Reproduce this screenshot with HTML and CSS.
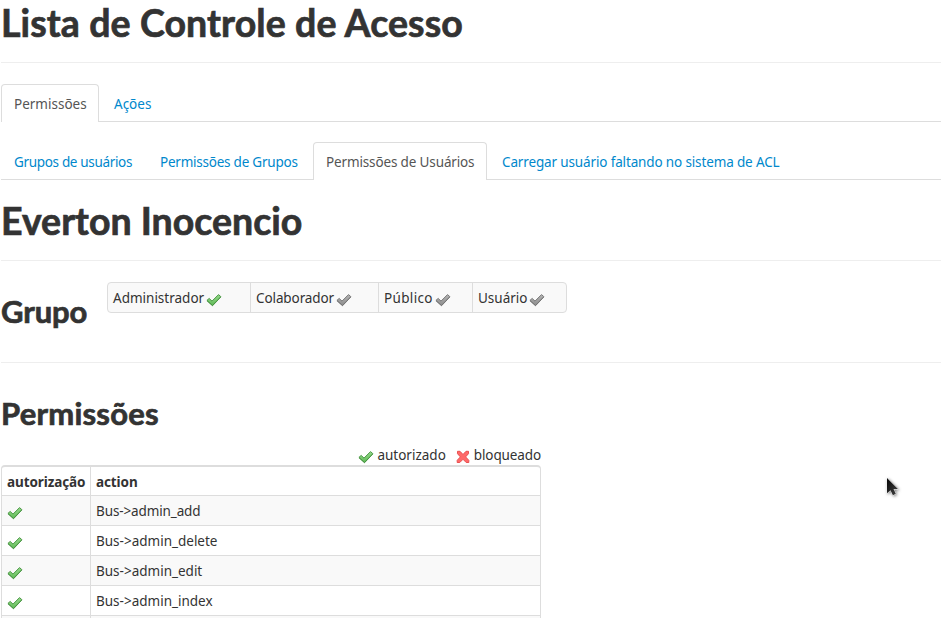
FILE: index.html
```html
<!DOCTYPE html>
<html lang="pt-BR">
<head>
<meta charset="utf-8">
<title>Lista de Controle de Acesso</title>
<link rel="stylesheet" href="styles.css">
</head>
<body>
<svg class="defs" width="0" height="0" aria-hidden="true">
  <defs>
    <linearGradient id="green" x1="0" y1="0" x2="0" y2="1"><stop offset="0" stop-color="#93d68a"/><stop offset=".5" stop-color="#7ccb72"/><stop offset="1" stop-color="#5fb957"/></linearGradient>
    <linearGradient id="gray" x1="0" y1="0" x2="0" y2="1"><stop offset="0" stop-color="#b5b5b5"/><stop offset="1" stop-color="#8c8c8c"/></linearGradient>
    <linearGradient id="arrow" x1="0" y1="0" x2="1" y2="1"><stop offset="0" stop-color="#050505"/><stop offset="1" stop-color="#444"/></linearGradient>
    <symbol id="check" viewBox="0 0 16 16"><path d="M.9 8.4 3.2 6.4 6 9.1 12.5 2.6 14.9 4.7 6.5 13.5Z" stroke-width=".9" stroke-linejoin="round"/><path d="M1 8.8 6.5 13.8 14.8 5" style="fill:none" stroke-width=".8"/></symbol>
    <symbol id="cross" viewBox="0 0 16 16"><path d="M2.5 2.3H5L8 5.5 11 2.3H13.5V4.7L10.6 7.9 13.8 11.3V13.5H11.2L8 10.3 4.8 13.5H2.2V11.3L5.4 7.9 2.5 4.7Z" stroke-width="1" stroke-linejoin="round"/></symbol>
  </defs>
</svg>
<header class="page-header"><h1 class="title">Lista de Controle de Acesso</h1></header>
<nav class="tabs tabs-main">
  <a class="tab active t1"><span>Permissões</span></a>
  <a class="tab"><span>Ações</span></a>
</nav>
<nav class="tabs tabs-sub">
  <a class="tab s1"><span>Grupos de usuários</span></a>
  <a class="tab s2"><span>Permissões de Grupos</span></a>
  <a class="tab active s3"><span>Permissões de Usuários</span></a>
  <a class="tab s4"><span>Carregar usuário faltando no sistema de ACL</span></a>
</nav>
<section class="page-header user"><h1 class="name">Everton Inocencio</h1></section>
<section class="group">
  <h2 class="h2-group">Grupo</h2>
  <div class="roles">
    <div class="role"><span>Administrador</span><svg class="icon ok"><use href="#check"/></svg></div>
    <div class="role"><span class="collab">Colaborador</span><svg class="icon off"><use href="#check"/></svg></div>
    <div class="role"><span class="public">Público</span><svg class="icon off"><use href="#check"/></svg></div>
    <div class="role"><span>Usuário</span><svg class="icon off"><use href="#check"/></svg></div>
  </div>
</section>
<section class="permissions">
  <h2 class="h2-perm">Permissões</h2>
  <div class="legend"><svg class="icon ok"><use href="#check"/></svg><span class="l1">autorizado</span><svg class="icon no"><use href="#cross"/></svg><span class="l2">bloqueado</span></div>
  <div class="grid">
    <div class="row head"><b>autorização</b><b>action</b></div>
    <div class="row"><i><svg class="icon ok"><use href="#check"/></svg></i><span class="narrow">Bus-&gt;admin_add</span></div>
    <div class="row"><i><svg class="icon ok"><use href="#check"/></svg></i><span>Bus-&gt;admin_delete</span></div>
    <div class="row"><i><svg class="icon ok"><use href="#check"/></svg></i><span>Bus-&gt;admin_edit</span></div>
    <div class="row"><i><svg class="icon ok"><use href="#check"/></svg></i><span>Bus-&gt;admin_index</span></div>
    <div class="row"><i></i><span></span></div>
  </div>
</section>
<svg class="pointer" width="20" height="26" viewBox="0 0 20 26"><path d="M3 2V17.2L6.5 14.2 8.9 19.2 11.8 17.8 9.5 13.1H14Z" fill="url(#arrow)" stroke="#fff" stroke-width=".8" paint-order="stroke"/></svg>
</body>
</html>
```
FILE: styles.css
```css
*{box-sizing:border-box}
body{margin:0;padding:0 5px 0 1px;height:618px;overflow:hidden;background:#fff;color:#333;font:13.5px/20px "Noto Sans",sans-serif}
.defs{position:absolute}
h1,h2{margin:0;line-height:40px;white-space:nowrap;font-family:Lato,sans-serif;font-weight:700;-webkit-text-stroke:.7px #333}
h1{font-size:37.5px}
h2{font-size:31px}
.title{letter-spacing:.1px}
.page-header{height:63px;padding-top:3px;border-bottom:1px solid #eee}
.tabs{display:flex;height:38px;border-bottom:1px solid #ddd}
.tabs-main{margin-top:21px}
.tabs-sub{margin-top:20px}
.tab{height:37px;padding:10px 13px 0;margin-right:2px;color:#08c;white-space:nowrap}
.active{height:38px;padding:9px 12px 0;border:1px solid #ddd;border-bottom:0;border-radius:4px 4px 0 0;background:#fff;color:#555}
.t1{width:98px}
.s1{width:144px;letter-spacing:-.33px}
.s2{width:164px;letter-spacing:-.23px}
.s3{width:174px;letter-spacing:-.14px}
.s4{letter-spacing:-.14px}
.user{margin-top:21px;height:60px;padding-top:0}
.group{display:flex;height:102px;border-bottom:1px solid #eee}
.h2-group{width:106px;padding-top:30px;letter-spacing:-.1px}
.h2-perm{letter-spacing:.22px}
.roles{display:grid;grid-template-columns:142px 128px 94px 94px;width:460px;height:31px;margin-top:21px;border:1px solid #ddd;border-radius:4px;background:#f9f9f9}
.role{display:flex;padding:5px 5px 0}
.role+.role{border-left:1px solid #ddd}
.collab{letter-spacing:-.1px}
.public{letter-spacing:.35px}
.icon{width:16px;height:16px;flex:none}
.role .icon{margin:4px 0 0 2px}
.ok{fill:url(#green);stroke:#43913c}
.off{fill:url(#gray);stroke:#707070}
.no{fill:#ff6868;stroke:#e85050}
.permissions{width:540px;padding-top:30px}
.legend{display:flex;justify-content:flex-end;height:20px;margin-top:12px}
.legend .icon{margin:4px 3px 0 0}
.legend .no{margin-left:9px}
.l2{letter-spacing:-.12px}
.grid{border:1px solid #ddd;border-top-width:2px;border-radius:4px 4px 0 0}
.row{display:grid;grid-template-columns:88px 1fr;height:30px;border-bottom:1px solid #ddd}
.row>*{padding:5px}
.row>*+*{border-left:1px solid #ddd}
.row:nth-child(even){background:#f9f9f9}
.head{height:29px;letter-spacing:-.1px}
.row i .icon{display:block;margin-top:4px}
.narrow{letter-spacing:-.12px}
.pointer{position:absolute;left:884px;top:476px;filter:drop-shadow(1px 1px 1.5px rgba(0,0,0,.5))}
```
